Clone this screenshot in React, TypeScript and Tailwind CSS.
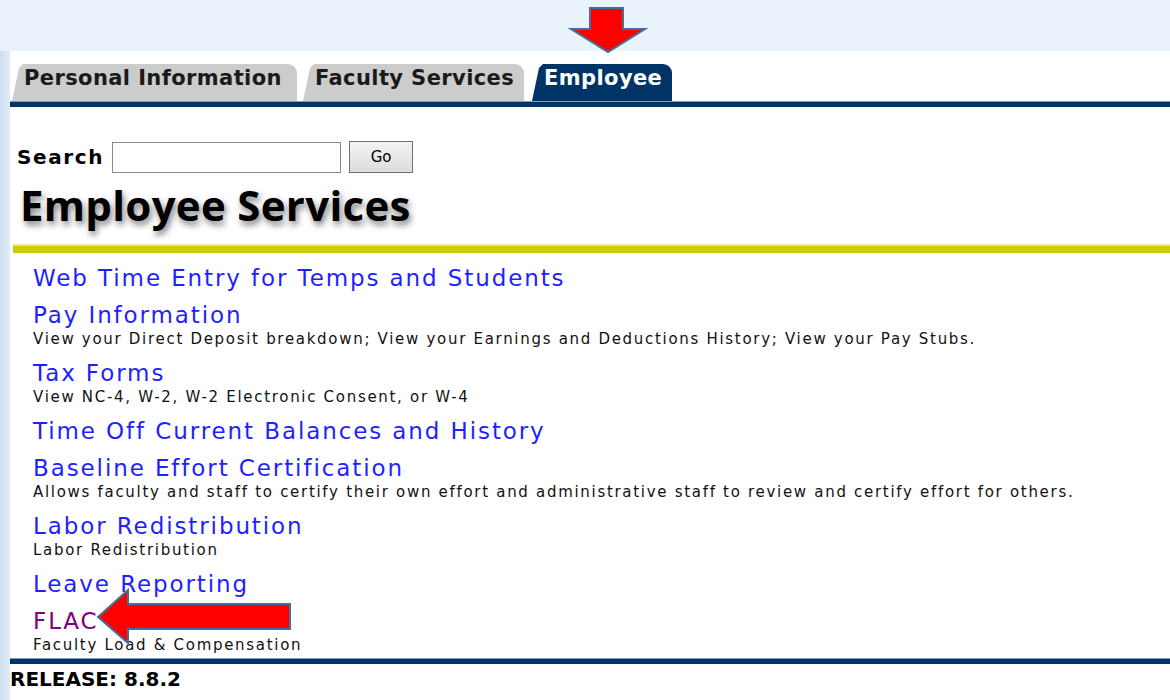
import React from 'react';

interface ServiceLink {
  title: string;
  description?: string;
  visited?: boolean;
}

const services: ServiceLink[] = [
  { title: 'Web Time Entry for Temps and Students' },
  {
    title: 'Pay Information',
    description:
      'View your Direct Deposit breakdown; View your Earnings and Deductions History; View your Pay Stubs.',
  },
  { title: 'Tax Forms', description: 'View NC-4, W-2, W-2 Electronic Consent, or W-4' },
  { title: 'Time Off Current Balances and History' },
  {
    title: 'Baseline Effort Certification',
    description:
      'Allows faculty and staff to certify their own effort and administrative staff to review and certify effort for others.',
  },
  { title: 'Labor Redistribution', description: 'Labor Redistribution' },
  { title: 'Leave Reporting' },
  { title: 'FLAC', description: 'Faculty Load & Compensation', visited: true },
];

const verdana = { fontFamily: '"DejaVu Sans", Verdana, sans-serif' };

function Tab({ label, active, width }: { label: string; active?: boolean; width: string }) {
  return (
    <div
      className={`${width} h-[37px] rounded-tr-[9px] [clip-path:polygon(0_100%,7px_4px,11px_0,100%_0,100%_100%)] pl-[12px] pt-[1px] text-[21px] font-bold leading-[26px] tracking-[0.4px] ${
        active ? 'bg-[#003366] text-white' : 'bg-[#cccccc] text-[#1a1a1a]'
      }`}
      style={verdana}
    >
      {label}
    </div>
  );
}

export default function App() {
  return (
    <div className="relative w-[1170px] h-[700px] overflow-hidden bg-[#eaf2fb] pt-[51px]">
      <div className="flex h-full">
        {/* left page gutter */}
        <div className="w-[10px] bg-gradient-to-r from-[#cddff2] to-[#e2ecf8]" />

        <div className="flex-1 bg-white">
          {/* tab strip */}
          <div className="flex items-end gap-[6px] pl-[2px] pt-[13px]">
            <Tab label="Personal Information" width="w-[285px]" />
            <Tab label="Faculty Services" width="w-[221px]" />
            <div className="ml-[2px]">
              <Tab label="Employee" width="w-[140px]" active />
            </div>
          </div>
          <div className="h-[6px] border-t border-[#7f9cbc] bg-[#003366]" />

          {/* search */}
          <div className="flex items-center pl-[7px] pt-[34px]" style={verdana}>
            <span className="text-[20px] font-bold tracking-[1.6px] text-black">Search</span>
            <input
              type="text"
              className="ml-[8px] h-[31px] w-[229px] border border-[#8a8a8a] bg-white outline-none"
            />
            <button className="ml-[8px] h-[32px] w-[64px] border border-[#707070] bg-gradient-to-b from-[#f4f4f4] to-[#dcdcdc] text-[15px] text-black">
              Go
            </button>
          </div>

          <h1
            className="pl-[10px] pt-[6px] text-[42px] font-bold leading-[52px] tracking-[0.3px] text-black [text-shadow:2px_4px_6px_rgba(0,0,0,0.5)]"
            style={{ fontFamily: '"Open Sans", sans-serif' }}
          >
            Employee Services
          </h1>

          <div className="ml-[3px] mt-[13px] h-[9px] border-t-2 border-[#e6e69a] bg-[#cccc00]" />

          {/* service menu */}
          <ul className="flex flex-col gap-[9px] pl-[23px] pt-[11px]" style={verdana}>
            {services.map((s) => (
              <li key={s.title}>
                <a
                  href="#"
                  className={`block text-[23px] leading-[28px] tracking-[1.9px] ${
                    s.visited ? 'text-[#800080]' : 'text-[#1f1fff]'
                  }`}
                >
                  {s.title}
                </a>
                {s.description && (
                  <div className="text-[15px] leading-[21px] tracking-[1.7px] text-[#111]">
                    {s.description}
                  </div>
                )}
              </li>
            ))}
          </ul>

          <div className="mt-[2px] h-[6px] border-t border-[#7f9cbc] bg-[#003366]" />
          <div className="text-[20px] font-bold leading-[30px] text-black" style={verdana}>
            RELEASE: 8.8.2
          </div>
        </div>
      </div>

      {/* callout arrows */}
      <svg className="absolute left-[560px] top-0" width="100" height="60" viewBox="0 0 100 60">
        <polygon
          points="30,8 63,8 63,29 85,29 48,52 11,29 30,29"
          fill="#ff0000"
          stroke="#41719c"
          strokeWidth="2"
        />
      </svg>
      <svg className="absolute left-[90px] top-[582px]" width="210" height="70" viewBox="0 0 210 70">
        <polygon
          points="8,35 38,8 38,22 200,22 200,47 38,47 38,61"
          fill="#ff0000"
          stroke="#41719c"
          strokeWidth="2"
        />
      </svg>
    </div>
  );
}
